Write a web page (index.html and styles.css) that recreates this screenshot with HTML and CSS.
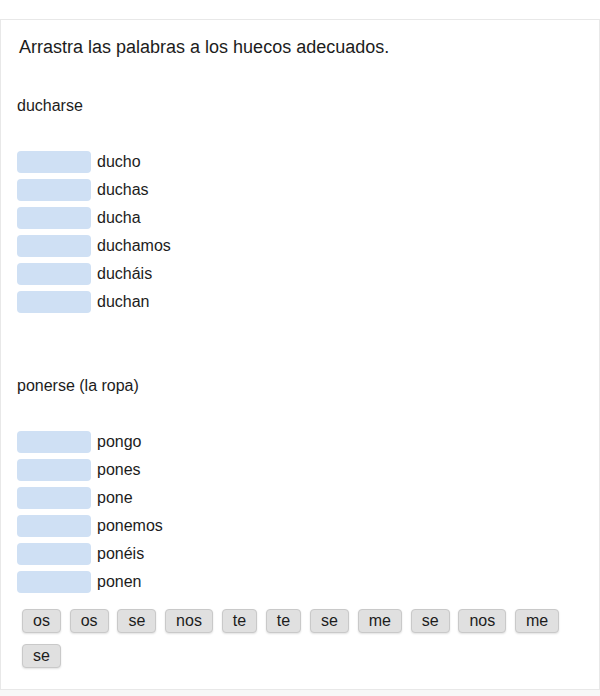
FILE: index.html
```html
<!DOCTYPE html>
<html lang="es">
<head>
    <meta charset="UTF-8">
    <meta name="viewport" content="width=device-width, initial-scale=1.0">
    <title>Arrastra las palabras</title>
    <link rel="stylesheet" href="styles.css">
</head>
<body>

    <div class="container">
        <p class="instrucciones">Arrastra las palabras a los huecos adecuados.</p>

        <div class="grupo">
            <p class="verbo">ducharse</p>
            <div class="fila"><span class="hueco"></span> ducho</div>
            <div class="fila"><span class="hueco"></span> duchas</div>
            <div class="fila"><span class="hueco"></span> ducha</div>
            <div class="fila"><span class="hueco"></span> duchamos</div>
            <div class="fila"><span class="hueco"></span> ducháis</div>
            <div class="fila"><span class="hueco"></span> duchan</div>
        </div>

        <div class="grupo">
            <p class="verbo">ponerse (la ropa)</p>
            <div class="fila"><span class="hueco"></span> pongo</div>
            <div class="fila"><span class="hueco"></span> pones</div>
            <div class="fila"><span class="hueco"></span> pone</div>
            <div class="fila"><span class="hueco"></span> ponemos</div>
            <div class="fila"><span class="hueco"></span> ponéis</div>
            <div class="fila"><span class="hueco"></span> ponen</div>
        </div>

        <!-- Palabras para arrastrar -->
        <div class="palabras">
            <span class="palabra">os</span>
            <span class="palabra">os</span>
            <span class="palabra">se</span>
            <span class="palabra">nos</span>
            <span class="palabra">te</span>
            <span class="palabra">te</span>
            <span class="palabra">se</span>
            <span class="palabra">me</span>
            <span class="palabra">se</span>
            <span class="palabra">nos</span>
            <span class="palabra">me</span>
            <span class="palabra">se</span>
        </div>
    </div>
    <div class="pie"></div>

</body>
</html>
```

FILE: styles.css
```css
body {
    margin: 0;
    padding-top: 19px;
    font-family: "Liberation Sans", Arial, sans-serif;
    color: #1c1c1c;
    background-color: #fff;
}
.container {
    border: 1px solid #e8e8e8;
    padding: 14px 16px 21px 16px;
}
.instrucciones {
    font-size: 18px;
    line-height: 27px;
    margin: 0 0 35px 2px;
}
.grupo {
    margin-bottom: 63px;
}
.grupo:nth-of-type(2) {
    margin-bottom: 16px;
}
.verbo {
    font-size: 16px;
    line-height: 20px;
    margin: 0 0 35px 0;
}
.fila {
    display: flex;
    align-items: center;
    font-size: 16px;
    height: 22px;
    margin-bottom: 6px;
}
.fila:last-child {
    margin-bottom: 0;
}
.hueco {
    display: inline-block;
    width: 74px;
    height: 22px;
    background-color: #cfe0f4;
    border-radius: 4px;
    margin-right: 6px;
}
.palabras {
    display: flex;
    flex-wrap: wrap;
    gap: 11px 8.8px;
    padding-left: 5px;
}
.palabra {
    font-size: 16px;
    line-height: 22px;
    padding: 0 10px;
    background-color: #e0e0e0;
    border: 1px solid #c9c9c9;
    border-radius: 4px;
    box-shadow: 0 1px 2px rgba(0, 0, 0, 0.12);
}
.pie {
    height: 6px;
    background-color: #f7f7f7;
}
```
